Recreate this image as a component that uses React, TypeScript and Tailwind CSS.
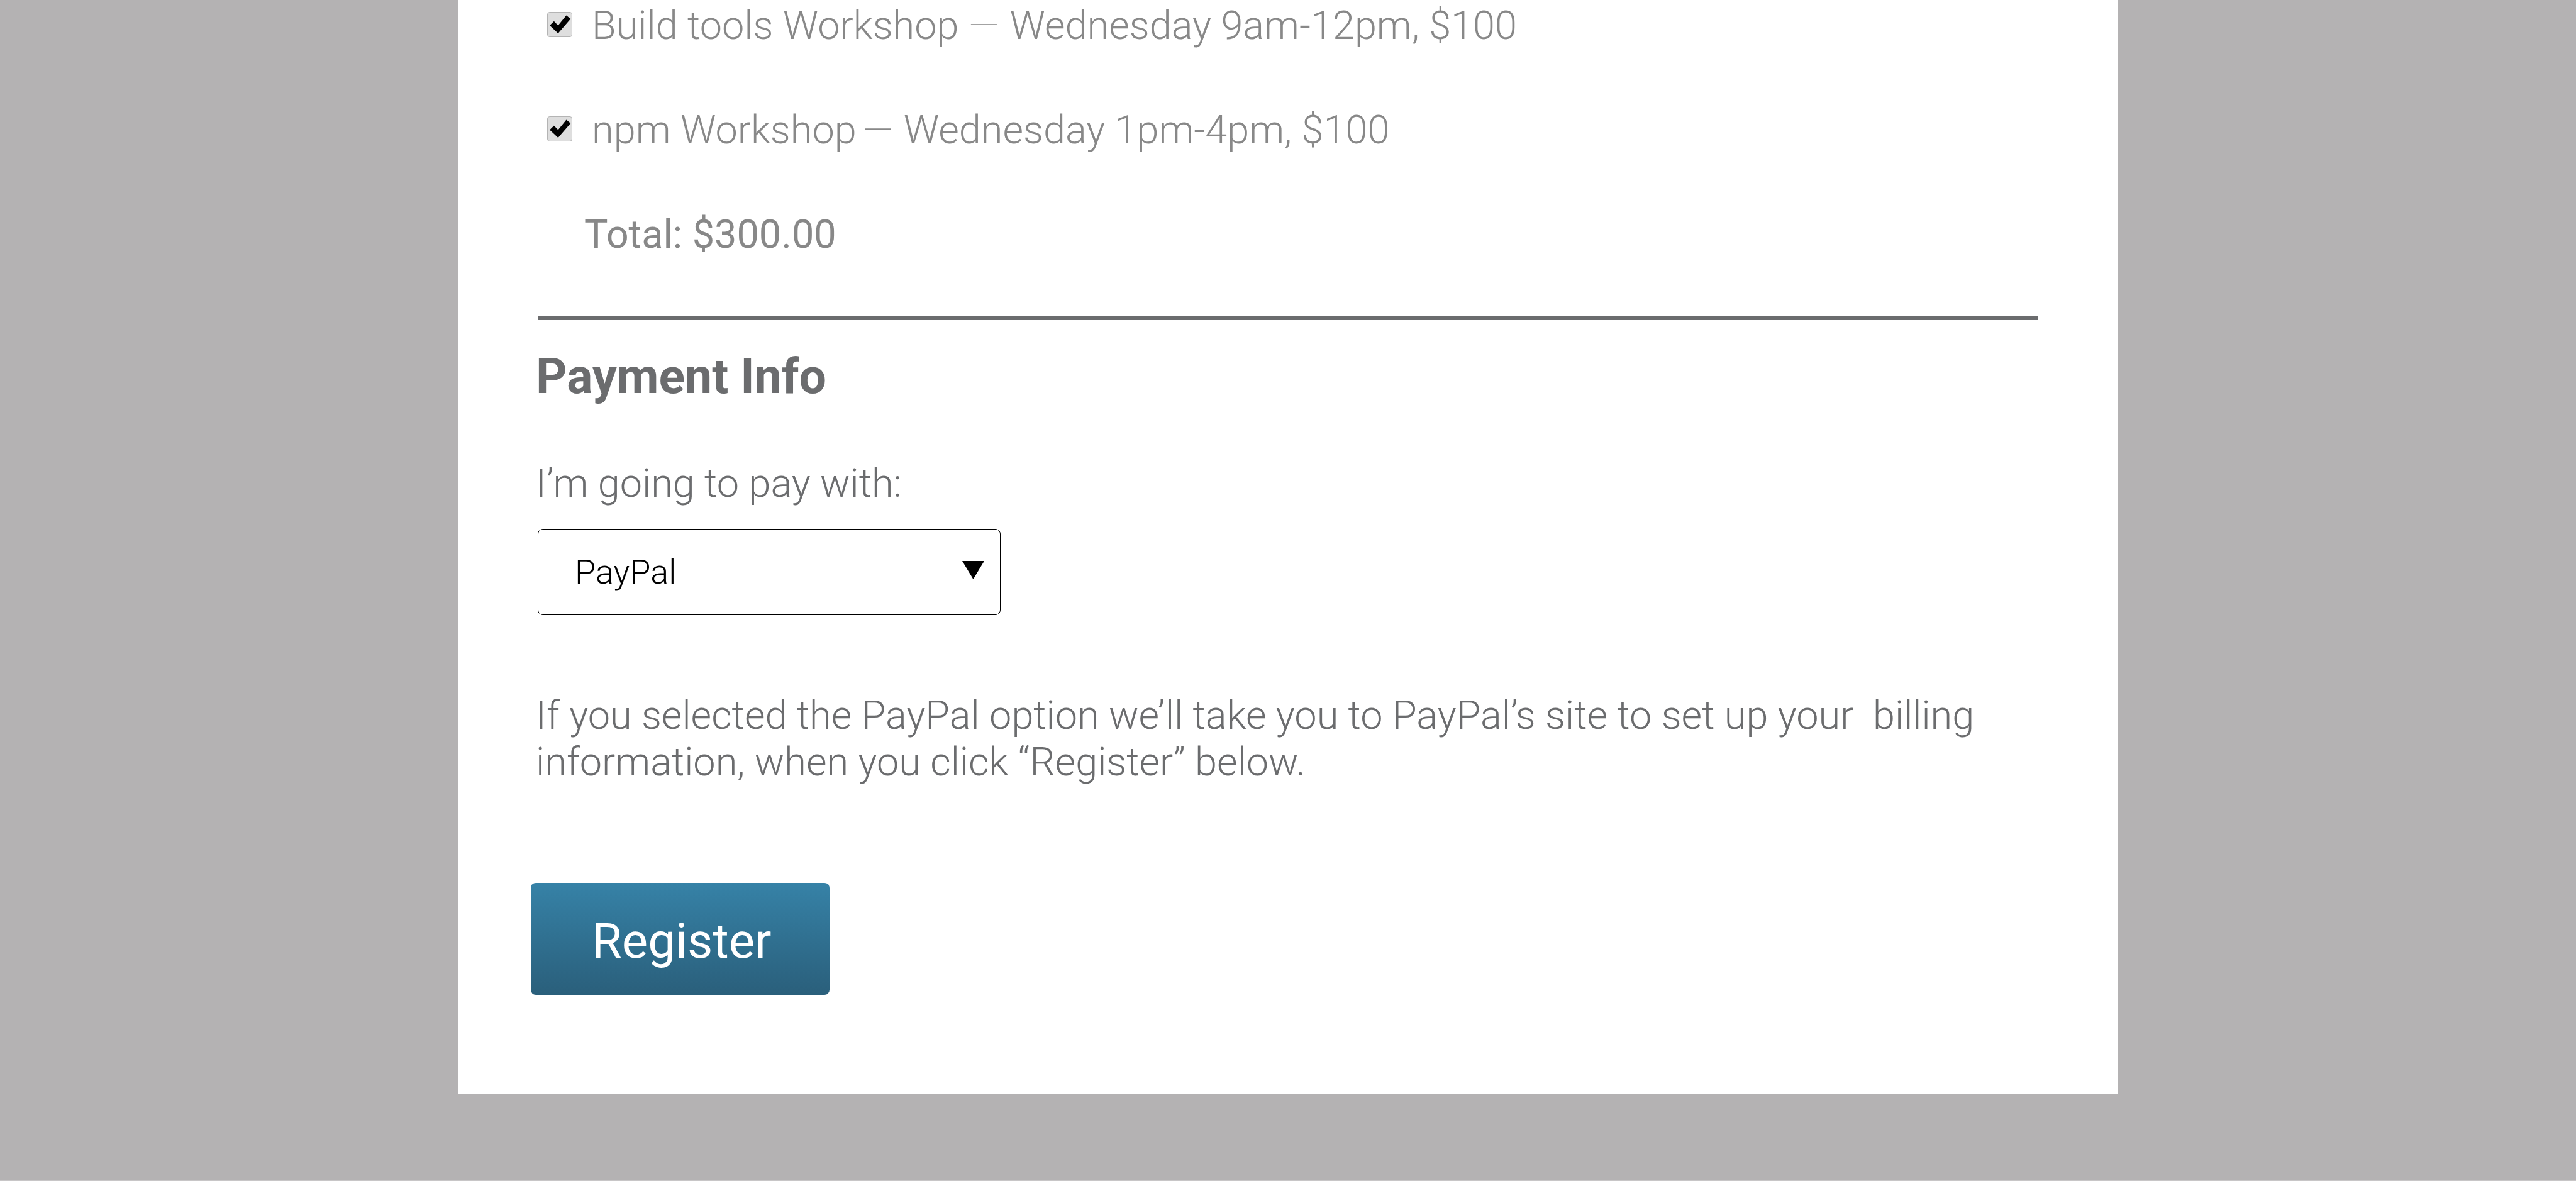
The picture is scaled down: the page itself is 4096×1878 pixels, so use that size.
import React from "react";

const workshops = [
  { id: "build-tools", name: "Build tools Workshop", details: "Wednesday 9am-12pm, $100", dash: "ml-4 mr-[17px] font-thin" },
  { id: "npm", name: "npm Workshop", details: "Wednesday 1pm-4pm, $100", dash: "ml-[10px] mr-[17px] font-thin" },
];

function Checkbox({ id }: { id: string }) {
  return (
    <span className="mt-[15px] grid size-10 shrink-0">
      <input
        id={id}
        type="checkbox"
        defaultChecked
        className="peer col-start-1 row-start-1 size-10 appearance-none rounded border border-[#b4b4b4] bg-[#dedede]"
      />
      <svg
        viewBox="0 0 147 147"
        aria-hidden="true"
        className="pointer-events-none invisible col-start-1 row-start-1 size-10 peer-checked:visible"
      >
        <path d="M15 79 40 54 64 79 112 20 137 40 64 125Z" fill="#000" />
      </svg>
    </span>
  );
}

export default function App() {
  return (
    <div className="min-h-screen border-b border-[#c8c6c7] bg-[#b4b2b3] font-['Roboto',sans-serif] text-[63px] leading-[74px] font-light text-[#6b6c6e]">
      <main className="mx-auto w-[64.4%] bg-white pr-[127px] pl-[123px] pt-1 pb-[157px]">
        <form onSubmit={(e) => e.preventDefault()}>
          <ul className="flex flex-col gap-[92px] pl-[18px] text-[#888888]">
            {workshops.map((w) => (
              <li key={w.id} className="flex items-start gap-[31px]">
                <Checkbox id={w.id} />
                <label htmlFor={w.id} className="flex">
                  {w.name}
                  <span className={w.dash}>—</span>
                  {w.details}
                </label>
              </li>
            ))}
          </ul>
          <p className="mt-[92px] pl-[77px] font-normal text-[#888888]">Total: $300.00</p>

          <hr className="mt-[92px] ml-[3px] h-[7px] border-0 bg-[#6b6c6e]" />

          <h2 className="mt-[45px] text-[77px] leading-[90px] font-bold">Payment Info</h2>
          <label htmlFor="method" className="mt-[88px] block">
            I’m going to pay with:
          </label>
          <div className="mt-[35px] ml-[3px] grid w-[736px]">
            <select
              id="method"
              defaultValue="PayPal"
              className="col-start-1 row-start-1 h-[137px] appearance-none rounded-lg border border-black bg-white pl-[58px] text-[54px] text-black"
            >
              <option>PayPal</option>
              <option>Credit Card</option>
            </select>
            <svg
              viewBox="0 0 35 29"
              aria-hidden="true"
              className="pointer-events-none col-start-1 row-start-1 mt-[51px] mr-[26px] h-[29px] w-[35px] justify-self-end"
            >
              <path d="M0 0H35L17.5 29Z" fill="#000" />
            </svg>
          </div>
          <p className="mt-[123px] whitespace-pre-line">
            If you selected the PayPal option we’ll take you to PayPal’s site to set up your&nbsp; billing{"\n"}
            information, when you click “Register” below.
          </p>
          <button
            type="submit"
            className="mt-[155px] -ml-2 block h-[178px] w-[475px] rounded-lg bg-linear-to-b from-[#3682a7] to-[#2a5f7b] pt-2 pl-1 text-[78px] font-normal text-white"
          >
            Register
          </button>
        </form>
      </main>
    </div>
  );
}
